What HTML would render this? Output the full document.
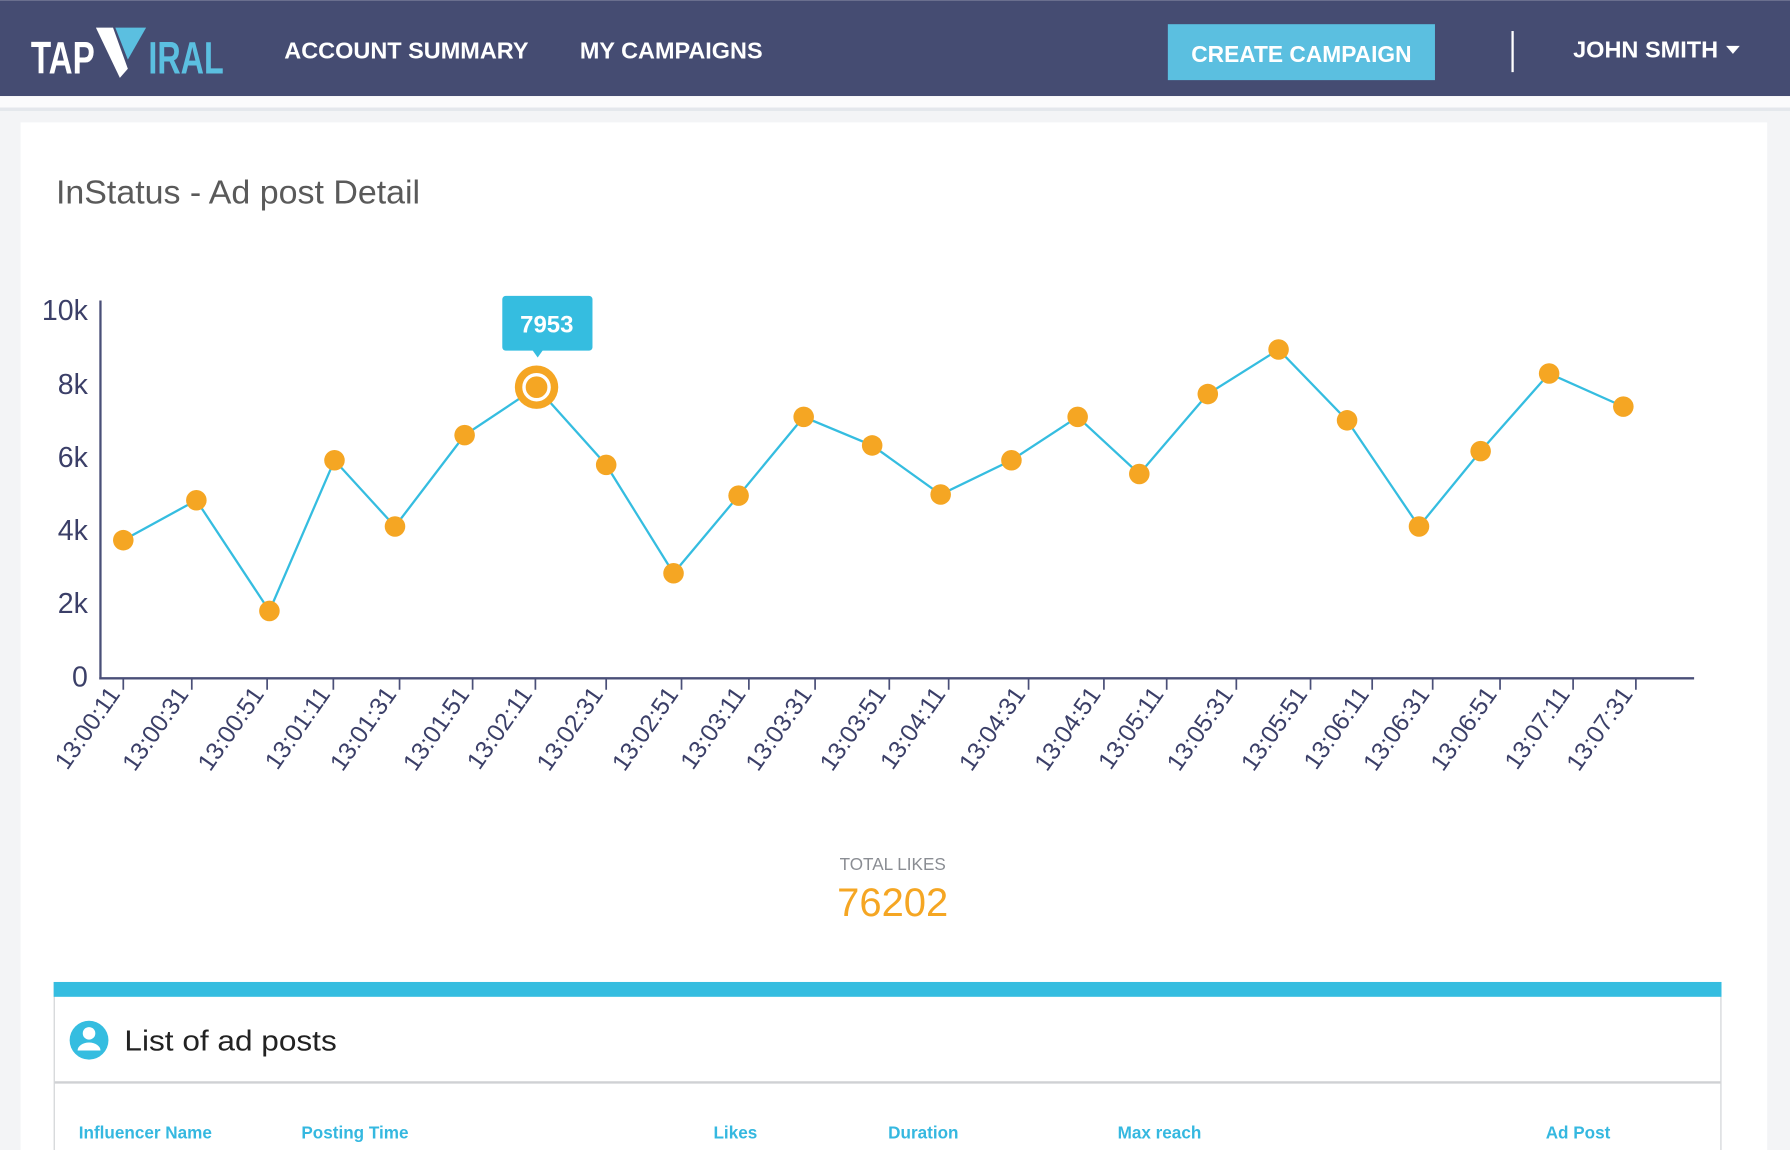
<!DOCTYPE html>
<html><head><meta charset="utf-8"><style>
html,body{margin:0;padding:0;background:#f3f4f6;overflow:hidden}
svg{display:block}
text{font-family:"Liberation Sans",sans-serif}
</style></head><body>
<svg width="1790" height="1150" viewBox="0 0 1568 1007" xmlns="http://www.w3.org/2000/svg">
<rect width="1568" height="1007" fill="#f3f4f6"/>
<!-- navbar -->
<rect width="1568" height="84" fill="#454c72"/>
<rect y="84" width="1568" height="10" fill="#fbfbfc"/>
<rect y="94" width="1568" height="3" fill="#e4e7ec"/>
<!-- logo -->
<text x="27" y="64" font-size="40" font-weight="bold" fill="#fff" textLength="56" lengthAdjust="spacingAndGlyphs">TAP</text>
<polygon points="84,24 99,24 112,60 105,68" fill="#fff"/>
<polygon points="101,24 128,24 112,52" fill="#5bbfe0"/>
<text x="130" y="64" font-size="40" font-weight="bold" fill="#5bbfe0" textLength="66" lengthAdjust="spacingAndGlyphs">IRAL</text>
<text x="249" y="51" font-size="20" font-weight="bold" fill="#fff" textLength="214" lengthAdjust="spacingAndGlyphs">ACCOUNT SUMMARY</text>
<text x="508" y="51" font-size="20" font-weight="bold" fill="#fff" textLength="160" lengthAdjust="spacingAndGlyphs">MY CAMPAIGNS</text>
<rect x="1023" y="21" width="234" height="49" fill="#5bbfe0"/>
<text x="1140" y="54" font-size="20" font-weight="bold" fill="#fff" text-anchor="middle" textLength="193" lengthAdjust="spacingAndGlyphs">CREATE CAMPAIGN</text>
<rect x="1324" y="27" width="2" height="36" fill="#fff"/>
<text x="1378" y="50" font-size="20" font-weight="bold" fill="#fff" textLength="127" lengthAdjust="spacingAndGlyphs">JOHN SMITH</text>
<polygon points="1512,40 1524,40 1518,47" fill="#fff"/>
<!-- card -->
<rect x="18" y="107" width="1530" height="920" fill="#fff"/>
<text x="49" y="178" font-size="29" fill="#5a5a5a" textLength="319" lengthAdjust="spacingAndGlyphs">InStatus - Ad post Detail</text>
<!-- axes -->
<g fill="#3b3f68" font-size="25" text-anchor="end">
<text x="77" y="280">10k</text><text x="77" y="345">8k</text><text x="77" y="409">6k</text>
<text x="77" y="473">4k</text><text x="77" y="537">2k</text><text x="77" y="601">0</text>
</g>
<line x1="88" y1="263" x2="88" y2="595" stroke="#4a4f78" stroke-width="2"/>
<line x1="87" y1="594" x2="1484" y2="594" stroke="#4a4f78" stroke-width="2"/>
<g stroke="#4a4f78" stroke-width="1.5">
<path d="M108 594v10M168 594v10M234 594v10M292 594v10M350 594v10M414 594v10M469 594v10M531 594v10M597 594v10M656 594v10M714 594v10M779 594v10M831 594v10M901 594v10M967 594v10M1022 594v10M1083 594v10M1148 594v10M1202 594v10M1255 594v10M1314 594v10M1378 594v10M1433 594v10"/>
</g>
<g fill="#3b3f68" font-size="21.5" text-anchor="end">
<text transform="translate(106,608) rotate(-55)">13:00:11</text>
<text transform="translate(166,608) rotate(-55)">13:00:31</text>
<text transform="translate(232,608) rotate(-55)">13:00:51</text>
<text transform="translate(290,608) rotate(-55)">13:01:11</text>
<text transform="translate(348,608) rotate(-55)">13:01:31</text>
<text transform="translate(412,608) rotate(-55)">13:01:51</text>
<text transform="translate(467,608) rotate(-55)">13:02:11</text>
<text transform="translate(529,608) rotate(-55)">13:02:31</text>
<text transform="translate(595,608) rotate(-55)">13:02:51</text>
<text transform="translate(654,608) rotate(-55)">13:03:11</text>
<text transform="translate(712,608) rotate(-55)">13:03:31</text>
<text transform="translate(777,608) rotate(-55)">13:03:51</text>
<text transform="translate(829,608) rotate(-55)">13:04:11</text>
<text transform="translate(899,608) rotate(-55)">13:04:31</text>
<text transform="translate(965,608) rotate(-55)">13:04:51</text>
<text transform="translate(1020,608) rotate(-55)">13:05:11</text>
<text transform="translate(1081,608) rotate(-55)">13:05:31</text>
<text transform="translate(1146,608) rotate(-55)">13:05:51</text>
<text transform="translate(1200,608) rotate(-55)">13:06:11</text>
<text transform="translate(1253,608) rotate(-55)">13:06:31</text>
<text transform="translate(1312,608) rotate(-55)">13:06:51</text>
<text transform="translate(1376,608) rotate(-55)">13:07:11</text>
<text transform="translate(1431,608) rotate(-55)">13:07:31</text>
</g>
<!-- line -->
<polyline fill="none" stroke="#35bde0" stroke-width="2" points="108,473 172,438 236,535 293,403 346,461 407,381 470,339 531,407 590,502 647,434 704,365 764,390 824,433 886,403 944,365 998,415 1058,345 1120,306 1180,368 1243,461 1297,395 1357,327 1422,356"/>
<g fill="#f5a623">
<circle cx="108" cy="473" r="9"/><circle cx="172" cy="438" r="9"/><circle cx="236" cy="535" r="9"/>
<circle cx="293" cy="403" r="9"/><circle cx="346" cy="461" r="9"/><circle cx="407" cy="381" r="9"/>
<circle cx="531" cy="407" r="9"/><circle cx="590" cy="502" r="9"/><circle cx="647" cy="434" r="9"/>
<circle cx="704" cy="365" r="9"/><circle cx="764" cy="390" r="9"/><circle cx="824" cy="433" r="9"/>
<circle cx="886" cy="403" r="9"/><circle cx="944" cy="365" r="9"/><circle cx="998" cy="415" r="9"/>
<circle cx="1058" cy="345" r="9"/><circle cx="1120" cy="306" r="9"/><circle cx="1180" cy="368" r="9"/>
<circle cx="1243" cy="461" r="9"/><circle cx="1297" cy="395" r="9"/><circle cx="1357" cy="327" r="9"/>
<circle cx="1422" cy="356" r="9"/>
<circle cx="470" cy="339" r="19"/>
</g>
<circle cx="470" cy="339" r="11" fill="none" stroke="#fff" stroke-width="3"/>
<!-- tooltip -->
<rect x="440" y="259" width="79" height="48" rx="3" fill="#35bde0"/>
<polygon points="466,306 476,306 471,313" fill="#35bde0"/>
<text x="479" y="291" font-size="21" font-weight="bold" fill="#fff" text-anchor="middle">7953</text>
<!-- totals -->
<text x="782" y="762" font-size="15" fill="#8a8d93" text-anchor="middle">TOTAL LIKES</text>
<text x="782" y="802" font-size="35" fill="#f5a623" text-anchor="middle">76202</text>
<!-- panel -->
<rect x="47.5" y="860.5" width="1460" height="160" fill="#fff" stroke="#cfd1d4"/>
<rect x="47" y="860" width="1461" height="13" fill="#35bde0"/>
<line x1="48" y1="948" x2="1507" y2="948" stroke="#cfd1d4" stroke-width="2"/>
<circle cx="78" cy="911" r="17" fill="#35bde0"/>
<circle cx="78" cy="905" r="5.5" fill="#fff"/>
<path d="M68,920 a10,7 0 0 1 20,0 z" fill="#fff"/>
<text x="109" y="920" font-size="25" fill="#222" textLength="186" lengthAdjust="spacingAndGlyphs">List of ad posts</text>
<g fill="#35b8e0" font-size="15" font-weight="bold">
<text x="69" y="997">Influencer Name</text><text x="264" y="997">Posting Time</text>
<text x="625" y="997">Likes</text><text x="778" y="997">Duration</text>
<text x="979" y="997">Max reach</text><text x="1354" y="997">Ad Post</text>
</g>
</svg>
</body></html>
